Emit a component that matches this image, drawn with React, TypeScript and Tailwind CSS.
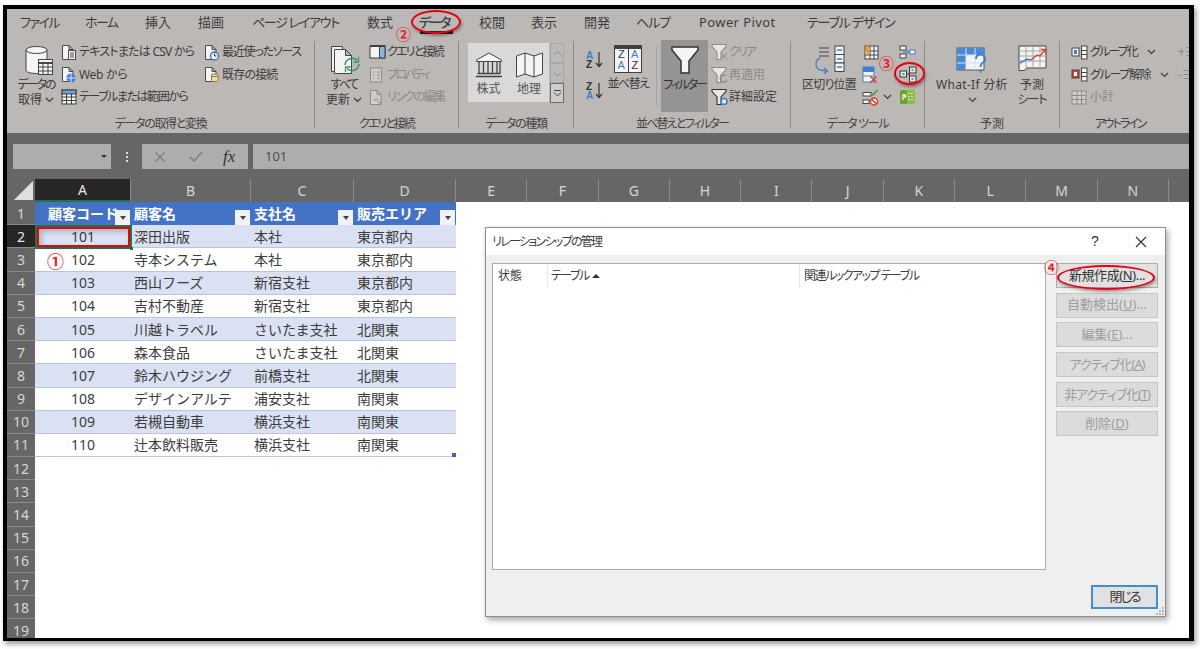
import React from 'react';

const ink = '#3c3c3c';
const dim = '#8d8a88';

const tabs = [
  { label: 'ファイル', w: 'w-[65px]', track: 'tracking-[-1.5px]' },
  { label: 'ホーム', w: 'w-[60px]', track: 'tracking-[-1.6px]' },
  { label: '挿入', w: 'w-[53px]', track: '' },
  { label: '描画', w: 'w-[54px]', track: '' },
  { label: 'ページ レイアウト', w: 'w-[115px]', track: 'tracking-[-1.3px]' },
  { label: '数式', w: 'w-[52px]', track: '' },
  { label: 'データ', w: 'w-[60px]', track: 'tracking-[-2px]' },
  { label: '校閲', w: 'w-[52px]', track: '' },
  { label: '表示', w: 'w-[53px]', track: '' },
  { label: '開発', w: 'w-[52px]', track: '' },
  { label: 'ヘルプ', w: 'w-[63px]', track: 'tracking-[-1px]' },
  { label: 'Power Pivot', w: 'w-[108px]', track: 'tracking-[0.4px]' },
  { label: 'テーブル デザイン', w: 'w-[100px]', track: 'tracking-[-1.2px]' },
];

const columns = [
  { label: 'A', w: 'w-[96px]' },
  { label: 'B', w: 'w-[120px]' },
  { label: 'C', w: 'w-[103px]' },
  { label: 'D', w: 'w-[102px]' },
  { label: 'E', w: 'w-[71.3px]' },
  { label: 'F', w: 'w-[71.3px]' },
  { label: 'G', w: 'w-[71.3px]' },
  { label: 'H', w: 'w-[71.3px]' },
  { label: 'I', w: 'w-[71.3px]' },
  { label: 'J', w: 'w-[71.3px]' },
  { label: 'K', w: 'w-[71.3px]' },
  { label: 'L', w: 'w-[71.3px]' },
  { label: 'M', w: 'w-[71.3px]' },
  { label: 'N', w: 'w-[71.3px]' },
];

const customers = [
  ['101', '深田出版', '本社', '東京都内'],
  ['102', '寺本システム', '本社', '東京都内'],
  ['103', '西山フーズ', '新宿支社', '東京都内'],
  ['104', '吉村不動産', '新宿支社', '東京都内'],
  ['105', '川越トラベル', 'さいたま支社', '北関東'],
  ['106', '森本食品', 'さいたま支社', '北関東'],
  ['107', '鈴木ハウジング', '前橋支社', '北関東'],
  ['108', 'デザインアルテ', '浦安支社', '南関東'],
  ['109', '若槻自動車', '横浜支社', '南関東'],
  ['110', '辻本飲料販売', '横浜支社', '南関東'],
];

const rowNumbers = Array.from({ length: 19 }, (_, i) => i + 1);

const Chev = ({ color = ink }: { color?: string }) => (
  <svg width="9" height="6" viewBox="0 0 9 6" className="shrink-0">
    <path d="M1 1l3.5 3.5L8 1" fill="none" stroke={color} strokeWidth="1.2" />
  </svg>
);

const Page = ({ stroke = '#4a4a4a' }: { stroke?: string }) => (
  <path d="M1.5 1.5h6.5l4 4v10h-10.500z M8 1.500v4h4" fill="#f4f4f4" stroke={stroke} strokeWidth="1" />
);

const TextFileIcon = () => (
  <svg width="17" height="17" viewBox="0 0 17 17">
    <Page />
    <rect x="7.500" y="6.500" width="7" height="9" fill="#f4f4f4" stroke="#4a4a4a" />
    <path d="M9 9h4M9 11h4M9 13h4" stroke="#4a4a4a" />
  </svg>
);
const WebIcon = () => (
  <svg width="17" height="17" viewBox="0 0 17 17">
    <Page />
    <circle cx="10" cy="12" r="4.500" fill="#3f7fcb" />
    <path d="M5.500 12h9M10 7.500v9" stroke="#dbe8f6" />
  </svg>
);
const RangeIcon = () => (
  <svg width="16" height="16" viewBox="0 0 16 16">
    <rect x="1" y="1" width="14" height="14" fill="#f4f4f4" stroke="#3f3f3f" />
    <rect x="1" y="1" width="14" height="4" fill="#6f9fd8" stroke="#3f3f3f" />
    <path d="M1 8h14M1 11.500h14M5.500 5v10M10.500 5v10" stroke="#3f3f3f" />
  </svg>
);
const RecentIcon = () => (
  <svg width="17" height="17" viewBox="0 0 17 17">
    <Page />
    <circle cx="10.500" cy="12" r="4" fill="#f4f4f4" stroke="#2f6db5" strokeWidth="1.300" />
    <path d="M10.500 9.500V12h2" fill="none" stroke="#333" />
  </svg>
);
const ExistingIcon = () => (
  <svg width="17" height="17" viewBox="0 0 17 17">
    <Page />
    <rect x="7.500" y="8" width="6.500" height="7.500" rx="1" fill="#eadcb4" stroke="#9a7a33" />
    <path d="M7.500 10.500h6.500" stroke="#9a7a33" />
  </svg>
);
const DataIcon = () => (
  <svg width="30" height="32" viewBox="0 0 30 32" className="ml-[5px]">
    <path d="M2 5v20c0 2 4 3.500 10.500 3.500S23 27 23 25V5" fill="#f5f5f5" stroke="#444" />
    <ellipse cx="12.500" cy="5" rx="10.500" ry="3.500" fill="#f5f5f5" stroke="#444" />
    <rect x="14.500" y="14.500" width="14" height="15" fill="#f5f5f5" stroke="#444" />
    <path d="M14.500 18h14" stroke="#444" strokeWidth="2" />
    <path d="M14.500 22h14M14.500 26h14M19 18v12M24 18v12" stroke="#444" />
  </svg>
);
const RefreshIcon = () => (
  <svg width="32" height="32" viewBox="0 0 32 32" className="ml-[4px]">
    <path d="M1.500 1.500h11v25h-11z" fill="#f4f4f4" stroke="#444" />
    <path d="M4.500 4.500h11l6 6v18h-17z M15.500 4.500v6h6" fill="#f4f4f4" stroke="#444" />
    <path d="M15 20a7 7 0 0 1 12-4.500M29 19a7 7 0 0 1-12 4.500" fill="none" stroke="#2f9a58" strokeWidth="1.500" />
    <path d="M28.500 12v5h-5M15.500 27v-5h5" fill="none" stroke="#2f9a58" strokeWidth="1.300" />
  </svg>
);
const QueryIcon = () => (
  <svg width="17" height="14" viewBox="0 0 17 14">
    <rect x="1" y="1" width="15" height="12" fill="#f4f4f4" stroke="#3f3f3f" />
    <rect x="10.500" y="1" width="5.500" height="12" fill="#8db4e2" stroke="#3f3f3f" />
    <path d="M1 1h15" stroke="#3f3f3f" strokeWidth="2" />
  </svg>
);
const PropIcon = () => (
  <svg width="14" height="16" viewBox="0 0 14 16">
    <rect x="1.500" y="1" width="11" height="14" fill="#cfccc9" stroke={dim} />
    <path d="M4 5h1.500M8 5h3M4 8h1.500M8 8h3M4 11h1.500M8 11h3" stroke={dim} />
  </svg>
);
const LinkEditIcon = () => (
  <svg width="15" height="17" viewBox="0 0 15 17">
    <path d="M1.500 1.500h6.500l4 4v10h-10.500z M8 1.500v4h4" fill="#cfccc9" stroke={dim} />
    <path d="M5 12a2 2 0 0 1 4 0 2 2 0 0 0 4 0" fill="none" stroke={dim} />
  </svg>
);
const BankIcon = () => (
  <svg width="28" height="26" viewBox="0 0 28 26">
    <path d="M14 1L1.500 8v1.500h25V8z" fill="#f4f4f4" stroke="#444" />
    <path d="M4 10v11M8.500 10v11M13 10v11M17.500 10v11M22 10v11M25 10v11" stroke="#444" strokeWidth="1.300" />
    <path d="M2.500 21.500h23M1 24.500h26" stroke="#444" strokeWidth="1.300" />
  </svg>
);
const MapIcon = () => (
  <svg width="29" height="26" viewBox="0 0 29 26">
    <path d="M1.500 4l8.500-3 9 3 8.500-3v21l-8.500 3-9-3-8.500 3z" fill="#f4f4f4" stroke="#444" />
    <path d="M10 1v21M19 4v21" stroke="#444" />
  </svg>
);
const SortAz = ({ flip = false }: { flip?: boolean }) => (
  <div className="relative w-[17px] h-[17px] text-[10px] leading-[8.500px] font-bold font-['Liberation_Sans',sans-serif]">
    <div className={flip ? 'text-[#333]' : 'text-[#3f7fcb]'}>{flip ? 'Z' : 'A'}</div>
    <div className={flip ? 'text-[#3f7fcb]' : 'text-[#333]'}>{flip ? 'A' : 'Z'}</div>
    <svg width="8" height="16" viewBox="0 0 8 16" className="absolute right-0 top-0">
      <path d="M4 0v14M1 11l3 3.500L7 11" fill="none" stroke="#333" strokeWidth="1.200" />
    </svg>
  </div>
);
const SortBigIcon = () => (
  <div className="w-[28px] h-[28px] border border-[#3f3f3f] bg-[#f4f4f4] border-t-[4px] flex text-[11px] leading-[11px] text-center font-['Liberation_Sans',sans-serif]">
    <div className="flex-1 border-r border-[#3f3f3f] text-[#333]">Z<div className="text-[#3f7fcb]">A</div></div>
    <div className="flex-1 text-[#3f7fcb]">A<div className="text-[#333]">Z</div></div>
  </div>
);
const FunnelBig = () => (
  <svg width="30" height="30" viewBox="0 0 30 30">
    <path d="M2 2h26v3l-9 11v12h-8V16L2 5z" fill="#f4f4f4" stroke="#333" strokeWidth="1.500" />
  </svg>
);
const SmallFunnel = ({ color, badge }: { color: string; badge: React.ReactNode }) => (
  <svg width="18" height="18" viewBox="0 0 18 18">
    <path d="M1 1.500h14v2l-5 5.500v7.500H6V9L1 3.500z" fill="#e9e7e5" stroke={color} strokeWidth="1.100" />
    {badge}
  </svg>
);
const SplitIcon = () => (
  <svg width="34" height="30" viewBox="0 0 34 30" className="ml-[2px]">
    <path d="M6 3h10M6 7h10M6 11h10" stroke="#444" strokeWidth="1.200" />
    <rect x="22" y="1" width="9" height="8.500" fill="#f4f4f4" stroke="#444" />
    <rect x="22" y="9.500" width="9" height="8.500" fill="#f4f4f4" stroke="#444" />
    <rect x="22" y="18" width="9" height="8.500" fill="#f4f4f4" stroke="#444" />
    <path d="M24 5h5M24 14h5M24 22h5" stroke="#3f7fcb" strokeWidth="1.500" />
    <path d="M7 13a6.500 6.500 0 0 0 0 12l7 1M11 23l3.500 3-3.500 3" fill="none" stroke="#3f7fcb" strokeWidth="1.300" />
  </svg>
);
const FlashIcon = () => (
  <svg width="17" height="16" viewBox="0 0 17 16">
    <rect x="3" y="2" width="13" height="13" fill="#f4f4f4" stroke="#444" />
    <path d="M3 7h13M3 11h13M8 2v13M12 2v13" stroke="#444" />
    <path d="M6 0L2 8h3l-2 6 6-8H6l2-6z" fill="#e8912d" />
  </svg>
);
const DupIcon = () => (
  <svg width="17" height="18" viewBox="0 0 17 18">
    <rect x="1" y="1" width="11" height="15" fill="#f4f4f4" stroke="#3f7fcb" />
    <rect x="1" y="1" width="11" height="5" fill="#3f7fcb" />
    <path d="M1 10h11" stroke="#3f7fcb" />
    <path d="M8.500 10.500l6 6M14.500 10.500l-6 6" stroke="#d8412f" strokeWidth="1.600" />
  </svg>
);
const ValidateIcon = () => (
  <svg width="17" height="17" viewBox="0 0 17 17">
    <rect x="1" y="3.500" width="8" height="3.500" fill="#f4f4f4" stroke="#444" />
    <rect x="1" y="11" width="6" height="3.500" fill="#f4f4f4" stroke="#444" />
    <path d="M9 4l2 2 4.500-5" fill="none" stroke="#3f9a4f" strokeWidth="1.400" />
    <circle cx="12" cy="12.500" r="3.500" fill="#f4f4f4" stroke="#d8412f" strokeWidth="1.500" />
    <path d="M9.500 10l5 5" stroke="#d8412f" strokeWidth="1.500" />
  </svg>
);
const ConsolidateIcon = () => (
  <svg width="17" height="15" viewBox="0 0 17 15">
    <rect x="1" y="1" width="6" height="4" fill="#f4f4f4" stroke="#444" />
    <rect x="1" y="9" width="6" height="4" fill="#f4f4f4" stroke="#444" />
    <rect x="11" y="5" width="5" height="4" fill="#f4f4f4" stroke="#3f7fcb" />
    <path d="M4 7h6M8 5l2 2-2 2" fill="none" stroke="#3f7fcb" />
  </svg>
);
const RelationIcon = () => (
  <svg width="18" height="17" viewBox="0 0 18 17">
    <rect x="10.500" y="1" width="6.500" height="6" fill="#e9e7e5" stroke="#3a3a3a" />
    <rect x="10.500" y="10" width="6.500" height="6" fill="#e9e7e5" stroke="#3a3a3a" />
    <rect x="1" y="5" width="6.500" height="6" fill="#e9e7e5" stroke="#3a3a3a" />
    <path d="M7.500 8h3M10.500 4v9" stroke="#3a3a3a" />
    <path d="M3 8h2.500M12.500 4h2M12.500 13h2" stroke="#3a3a3a" />
  </svg>
);
const ModelIcon = () => (
  <svg width="17" height="16" viewBox="0 0 17 16">
    <rect x="1" y="1" width="15" height="14" rx="1.500" fill="#8cbf45" />
    <rect x="1" y="1" width="7" height="14" rx="1.500" fill="#6aa52e" />
    <path d="M4 11V6h2.500v2H5M10 4v1M13 4v1M10 7v1M13 7v1M10 10v1M13 10v1" fill="none" stroke="#f4f4f4" strokeWidth="1.300" />
  </svg>
);
const WhatIfIcon = () => (
  <svg width="32" height="30" viewBox="0 0 32 30">
    <rect x="1" y="2" width="27" height="22" fill="#f4f4f4" stroke="#555" />
    <rect x="1" y="2" width="9" height="22" fill="#4a8ad4" />
    <rect x="1" y="2" width="27" height="7" fill="#4a8ad4" />
    <rect x="10" y="9" width="9" height="8" fill="#f4f4f4" />
    <path d="M10 2v22M19 2v22M1 9h27M1 17h27" stroke="#d6e2f0" />
    <path d="M20 13a4.500 4.500 0 1 1 6.500 4c-1.500 1-2 2-2 4M24.500 24v2.500" fill="none" stroke="#3f7fcb" strokeWidth="2" />
  </svg>
);
const ForecastIcon = () => (
  <svg width="29" height="26" viewBox="0 0 29 26">
    <path d="M1 1h27v22H9l-3 2.500H1z" fill="#f4f4f4" stroke="#444" />
    <path d="M1 6h27M1 11h27M1 16h27M8 1v22M15 1v22M22 1v22" stroke="#a8a6a4" />
    <path d="M2 18l7-4 4 1" fill="none" stroke="#3f7fcb" strokeWidth="1.500" />
    <path d="M13 15l6-5 3 1 5-6M23 4.500h4.500V9" fill="none" stroke="#d8412f" strokeWidth="1.300" />
  </svg>
);
const GroupIcon = ({ ungroup = false }: { ungroup?: boolean }) => (
  <svg width="17" height="15" viewBox="0 0 17 15">
    <rect x="1" y="3" width="7" height="8" fill={ungroup ? '#d8412f' : '#f4f4f4'} stroke="#444" />
    <rect x="3" y="5" width="3" height="4" fill={ungroup ? '#f4f4f4' : '#3f7fcb'} />
    <rect x="10.500" y="1" width="5.500" height="13" fill="#f4f4f4" stroke="#444" />
    <path d="M10.500 5.500H16M10.500 9.500H16" stroke="#444" />
  </svg>
);
const SubtotalIcon = () => (
  <svg width="16" height="15" viewBox="0 0 16 15">
    <rect x="1" y="1" width="14" height="13" fill="#cfccc9" stroke={dim} />
    <path d="M1 5.500h14M1 9.500h14M6 1v13M10.500 1v13" stroke={dim} />
  </svg>
);

const Group = ({ label, w, track = '', children }: { label: string; w: string; track?: string; children: React.ReactNode }) => (
  <div className={`${w} shrink-0 h-[87px] mt-[4px] flex flex-col border-r border-[#8f8c8a]`}>
    <div className="h-[75px] flex">{children}</div>
    <div className={`h-[12px] leading-[16px] text-[12px] text-center whitespace-nowrap text-[#444] ${track}`}>{label}</div>
  </div>
);

const Row = ({ icon, label, off = false, track = '', tail, iconW = 'w-[18px]' }: { icon: React.ReactNode; label: string; off?: boolean; track?: string; tail?: React.ReactNode; iconW?: string }) => (
  <div className={`h-[22.5px] flex items-center whitespace-nowrap text-[12px] ${off ? 'text-[#8d8a88]' : 'text-[#3c3c3c]'}`}>
    <div className={`${iconW} shrink-0 flex items-center`}>{icon}</div>
    <span className={track}>{label}</span>
    {tail}
  </div>
);

const BigButton = ({ icon, lines, w, chev = false }: { icon: React.ReactNode; lines: { text: string; track?: string }[]; w: string; chev?: boolean }) => (
  <div className={`${w} shrink-0 flex flex-col items-center pt-[4px] text-[12px] text-[#3c3c3c] whitespace-nowrap`}>
    <div className="h-[33px] flex items-start justify-center">{icon}</div>
    {lines.map((line, i) => (
      <div key={line.text} className="h-[14.500px] leading-[14px] flex items-center gap-[3px]">
        <span className={line.track}>{line.text}</span>
        {chev && i === lines.length - 1 && <Chev />}
      </div>
    ))}
  </div>
);

const ScrollButton = ({ last = false, up = false }: { last?: boolean; up?: boolean }) => (
  <div className={`h-[20px] w-[14px] border flex items-center justify-center ${last ? 'border-[#6e6c6a] bg-[#cfccc9]' : 'border-[#a9a6a4]'}`}>
    <svg width="9" height="7" viewBox="0 0 9 7">
      {last && <path d="M1 0.500h7" stroke="#444" />}
      <path d={up ? 'M1 5l3.500-3.500L8 5' : 'M1 2.500L4.500 6 8 2.500'} fill="none" stroke={last ? '#444' : '#8d8a88'} />
    </svg>
  </div>
);

const Ribbon = () => (
  <div className="h-[124px] bg-[#bcb8b5] shrink-0 shadow-[0_1px_2px_#333]">
    <div className="h-[28px] flex items-center pl-[13px] text-[13px] text-[#3c3c3c] whitespace-nowrap">
      {tabs.map((tab) => (
        <div key={tab.label} className={`${tab.w} ${tab.track} shrink-0 ${tab.label === 'データ' ? 'font-medium' : ''}`}>{tab.label}</div>
      ))}
    </div>
    <div className="flex">
      <Group label="データの取得と変換" w="w-[308px]" track="tracking-[-1.3px]">
        <div className="pl-[7px]" />
        <BigButton w="w-[44px]" icon={<DataIcon />} lines={[{ text: 'データの', track: 'tracking-[-2px]' }, { text: '取得' }]} chev />
        <div className="ml-[3px] w-[143px] shrink-0">
          <Row icon={<TextFileIcon />} label="テキストまたは CSV から" track="tracking-[-0.75px]" />
          <Row icon={<WebIcon />} label="Web から" track="tracking-[-0.3px]" />
          <Row icon={<RangeIcon />} label="テーブルまたは範囲から" track="tracking-[-1.45px]" />
        </div>
        <div>
          <Row icon={<RecentIcon />} label="最近使ったソース" track="tracking-[-1.25px]" />
          <Row icon={<ExistingIcon />} label="既存の接続" track="tracking-[-0.8px]" />
        </div>
      </Group>
      <Group label="クエリと接続" w="w-[144px]" track="tracking-[-2px]">
        <div className="pl-[7px]" />
        <BigButton w="w-[44px]" icon={<RefreshIcon />} lines={[{ text: 'すべて', track: 'tracking-[-2px]' }, { text: '更新' }]} chev />
        <div className="ml-[3px]">
          <Row icon={<QueryIcon />} label="クエリと接続" track="tracking-[-1.800px]" />
          <Row icon={<PropIcon />} label="プロパティ" off track="tracking-[-2.400px]" />
          <Row icon={<LinkEditIcon />} label="リンクの編集" off track="tracking-[-1.500px]" />
        </div>
      </Group>
      <Group label="データの種類" w="w-[115px]" track="tracking-[-1.3px]">
        <div className="ml-[9px] mt-[2px] w-[81px] h-[59px] bg-[#d9d9d9] flex text-[12px] text-[#555]">
          <div className="w-[41px] flex flex-col items-center pt-[9px]">
            <BankIcon />
            <div className="mt-[3px] leading-[16px]">株式</div>
          </div>
          <div className="w-[40px] flex flex-col items-center pt-[9px]">
            <MapIcon />
            <div className="mt-[3px] leading-[16px]">地理</div>
          </div>
        </div>
        <div className="mt-[2px] ml-px">
          <ScrollButton up />
          <ScrollButton />
          <ScrollButton last />
        </div>
      </Group>
      <Group label="並べ替えとフィルター" w="w-[217px]" track="tracking-[-1.8px]">
        <div className="pl-[12px] pt-[11px] w-[33px] shrink-0 flex flex-col gap-[14px]">
          <SortAz />
          <SortAz flip />
        </div>
        <div className="w-[42px] shrink-0 flex flex-col items-center pt-[4px] text-[12px] text-[#3c3c3c] whitespace-nowrap">
          <SortBigIcon />
          <div className="mt-[4px] leading-[14px] tracking-[-1.5px]">並べ替え</div>
        </div>
        <div className="ml-[7px] mt-[6px] w-px h-[58px] bg-[#a5a2a0]" />
        <div className="ml-[4px] -mt-px w-[47px] h-[72px] bg-[#969493] flex flex-col items-center pt-[5px] text-[12px] text-[#333] whitespace-nowrap shrink-0">
          <FunnelBig />
          <div className="mt-[3px] leading-[14px] tracking-[-2px]">フィルター</div>
        </div>
        <div className="ml-[3px]">
          <Row icon={<SmallFunnel color={dim} badge={<path d="M10 10l6 6M16 10l-6 6" stroke={dim} />} />} label="クリア" off track="tracking-[-2px]" />
          <Row icon={<SmallFunnel color={dim} badge={<path d="M15 10a3.500 3.500 0 1 0 1 4" fill="none" stroke={dim} strokeWidth="1.300" />} />} label="再適用" off />
          <Row icon={<SmallFunnel color="#333" badge={<circle cx="13" cy="13.500" r="3" fill="#dce7f3" stroke="#3f7fcb" strokeWidth="1.500" />} />} label="詳細設定" />
        </div>
      </Group>
      <Group label="データ ツール" w="w-[134px]" track="tracking-[-1.3px]">
        <div className="pl-[9px]" />
        <BigButton w="w-[58px]" icon={<SplitIcon />} lines={[{ text: '区切り位置', track: 'tracking-[-0.8px]' }]} />
        <div className="ml-[4px] w-[37px] shrink-0">
          <div className="h-[22.5px] flex items-center"><FlashIcon /></div>
          <div className="h-[22.5px] flex items-center"><DupIcon /></div>
          <div className="h-[22.5px] flex items-center gap-[4px]"><ValidateIcon /><Chev /></div>
        </div>
        <div>
          <div className="h-[22.5px] flex items-center"><ConsolidateIcon /></div>
          <div className="h-[22.5px] flex items-center"><RelationIcon /></div>
          <div className="h-[22.5px] flex items-center"><ModelIcon /></div>
        </div>
      </Group>
      <Group label="予測" w="w-[135px]">
        <div className="pl-[7px]" />
        <div className="w-[80px] shrink-0 flex flex-col items-center pt-[5px] text-[12px] text-[#3c3c3c] whitespace-nowrap">
          <div className="h-[32px]"><WhatIfIcon /></div>
          <div className="h-[14.500px] leading-[14px] tracking-[0.3px]">What-If 分析</div>
          <div className="h-[14.500px] flex items-center"><Chev /></div>
        </div>
        <BigButton w="w-[40px]" icon={<ForecastIcon />} lines={[{ text: '予測' }, { text: 'シート', track: 'tracking-[-1px]' }]} />
      </Group>
      <div className="h-[87px] mt-[4px] flex-1 flex flex-col">
        <div className="h-[75px] flex pl-[11px]">
          <div className="w-[107px] shrink-0">
            <Row iconW="w-[19px]" icon={<GroupIcon />} label="グループ化" track="tracking-[-1.8px]" tail={<span className="ml-[10px]"><Chev /></span>} />
            <Row iconW="w-[19px]" icon={<GroupIcon ungroup />} label="グループ解除" track="tracking-[-1.3px]" tail={<span className="ml-[10px]"><Chev /></span>} />
            <Row iconW="w-[19px]" icon={<SubtotalIcon />} label="小計" off />
          </div>
          <div className="text-[12px] text-[#8d8a88] whitespace-nowrap">
            <div className="h-[22.5px] flex items-center">+ヨ</div>
            <div className="h-[22.5px] flex items-center">-ヨ</div>
          </div>
        </div>
        <div className="h-[12px] leading-[16px] text-[12px] text-center text-[#444] w-[120px] tracking-[-2px]">アウトライン</div>
      </div>
    </div>
  </div>
);

const FormulaBar = () => (
  <div className="h-[46px] shrink-0 bg-[#666666] pt-[11px]">
    <div className="h-[25px] flex">
      <div className="ml-[6px] w-[98px] bg-[#adadad] flex items-center justify-end pr-[4px]">
        <div className="w-0 h-0 border-x-[3px] border-x-transparent border-t-[3px] border-t-[#333]" />
      </div>
      <div className="w-[31px] flex flex-col items-center justify-center gap-[2px]">
        <div className="w-[2px] h-[2px] bg-[#ddd]" />
        <div className="w-[2px] h-[2px] bg-[#ddd]" />
        <div className="w-[2px] h-[2px] bg-[#ddd]" />
      </div>
      <div className="w-[106px] bg-[#adadad] flex items-center pl-[12px] text-[#555]">
        <svg width="12" height="12" viewBox="0 0 12 12">
          <path d="M1.500 1.500l9 9M10.500 1.500l-9 9" stroke="#7d7d7d" strokeWidth="1.300" />
        </svg>
        <svg width="14" height="12" viewBox="0 0 14 12" className="ml-[23px]">
          <path d="M1 6l4 4 8-9" fill="none" stroke="#7d7d7d" strokeWidth="1.500" />
        </svg>
        <span className="ml-[20px] font-['Liberation_Serif',serif] italic text-[17px] text-[#333] font-medium">fx</span>
      </div>
      <div className="ml-[5px] flex-1 bg-[#adadad] pl-[12px] text-[13px] leading-[25px] text-[#4d4d4d]">101</div>
    </div>
  </div>
);

const ColumnHeaders = () => (
  <div className="h-[23px] shrink-0 bg-[#666666] flex text-[14px] text-[#d6d6d6]">
    <div className="w-[28px] shrink-0 relative">
      <div className="absolute right-[2px] bottom-[2px] w-0 h-0 border-l-[19px] border-l-transparent border-b-[19px] border-b-[#dfdfdf]" />
    </div>
    {columns.map((col) => (
      <div
        key={col.label}
        className={`${col.w} shrink-0 flex items-center justify-center border-r border-[#8a8a8a] ${col.label === 'A' ? 'bg-[#262626] text-[#e6e6e6] border-b-2 border-b-[#217346]' : ''}`}
      >
        {col.label}
      </div>
    ))}
  </div>
);

const FilterButton = () => (
  <div className="absolute right-px bottom-0 w-[15px] h-[15px] bg-[#f2f2f2] flex items-center justify-center">
    <div className="w-0 h-0 border-x-[3.500px] border-x-transparent border-t-[4px] border-t-[#444]" />
  </div>
);

const headCell = 'relative h-full flex items-center whitespace-nowrap overflow-hidden shrink-0';
const bodyCell = 'h-full flex items-center whitespace-nowrap shrink-0';

const Sheet = () => (
  <div className="flex-1 min-h-0 overflow-hidden bg-white [font-feature-settings:normal]">
    {rowNumbers.map((n) => {
      const row = n >= 2 && n <= 11 ? customers[n - 2] : null;
      const band = n % 2 === 0 ? 'bg-[#d9e1f2]' : 'bg-white';
      return (
        <div key={n} className="h-[23.2px] flex text-[14px]">
          <div className={`w-[28px] shrink-0 flex items-center justify-center border-b border-[#8a8a8a] ${n === 2 ? 'bg-[#262626] text-[#e6e6e6]' : 'bg-[#666666] text-[#d6d6d6]'}`}>
            {n}
          </div>
          {n === 1 && (
            <div className="flex w-[421px] bg-[#4472c4] text-white font-bold h-full">
              <div className={`${headCell} w-[96px] pl-[13px]`}>顧客コード<FilterButton /></div>
              <div className={`${headCell} w-[120px] pl-[3px]`}>顧客名<FilterButton /></div>
              <div className={`${headCell} w-[103px] pl-[3px]`}>支社名<FilterButton /></div>
              <div className={`${headCell} w-[102px] pl-[3px]`}>販売エリア<FilterButton /></div>
            </div>
          )}
          {row && (
            <div className={`flex w-[421px] h-full text-[#3c3c3c] border-b border-[#b4c6e7] ${band}`}>
              <div className={`${bodyCell} w-[96px] justify-center`}>{row[0]}</div>
              <div className={`${bodyCell} w-[120px] pl-[3px]`}>{row[1]}</div>
              <div className={`${bodyCell} w-[103px] pl-[3px]`}>{row[2]}</div>
              <div className={`${bodyCell} w-[102px] pl-[3px]`}>{row[3]}</div>
            </div>
          )}
        </div>
      );
    })}
  </div>
);

const dialogButtons = [
  { text: '自動検出', key: 'U', tail: '...', track: '' },
  { text: '編集', key: 'E', tail: '...', track: '' },
  { text: 'アクティブ化', key: 'A', tail: '', track: 'tracking-[-1.1px]' },
  { text: '非アクティブ化', key: 'T', tail: '', track: 'tracking-[-1.1px]' },
  { text: '削除', key: 'D', tail: '', track: '' },
];

const RelationshipDialog = () => (
  <div className="absolute left-[485px] top-[227px] w-[681px] h-[390px] bg-[#efefef] border border-[#8c8c8c] shadow-[2px_3px_6px_rgba(0,0,0,0.35)] flex flex-col">
    <div className="h-[27px] shrink-0 bg-white flex items-center pl-[6px] text-[12px] text-[#3c3c3c]">
      <span className="flex-1 whitespace-nowrap tracking-[-1.7px]">リレーションシップの管理</span>
      <span className="w-[44px] text-[14px] font-['Liberation_Sans',sans-serif] text-[#333]">?</span>
      <svg width="12" height="12" viewBox="0 0 12 12" className="mr-[18px]">
        <path d="M1 1l10 10M11 1L1 11" stroke="#333" strokeWidth="1.100" />
      </svg>
    </div>
    <div className="flex-1 flex pl-[6px] pt-[8px] pb-[7px]">
      <div className="w-[554px] h-[307px] bg-white border border-[#adadad] shrink-0 text-[12px] text-[#3c3c3c]">
        <div className="h-[24px] flex items-center whitespace-nowrap">
          <div className="w-[55px] h-full pl-[5px] leading-[24px] border-r border-[#e8e8e8]">状態</div>
          <div className="w-[252px] h-full pl-[3px] flex items-center gap-[3px] border-r border-[#e8e8e8]">
            <span className="tracking-[-1.5px]">テーブル</span>
            <div className="w-0 h-0 border-x-[4px] border-x-transparent border-b-[4px] border-b-[#333]" />
          </div>
          <div className="pl-[4px] tracking-[-1.5px]">関連ルックアップ テーブル</div>
        </div>
      </div>
      <div className="ml-[10px] w-[102px] flex flex-col justify-between text-[13px] whitespace-nowrap">
        <div className="flex flex-col gap-[4.700px]">
          <div className="h-[25px] border border-[#adadad] bg-[#e1e1e1] text-[#333] flex items-center justify-center tracking-[-0.4px]">新規作成(<u>N</u>)...</div>
          {dialogButtons.map((b) => (
            <div key={b.key} className={`h-[25px] border border-[#c6c6c6] bg-[#dcdcdc] text-[#9c9c9c] flex items-center justify-center ${b.track}`}>
              {b.text}(<u>{b.key}</u>){b.tail}
            </div>
          ))}
        </div>
        <div className="self-end w-[67px] h-[24px] border-2 border-[#3f8fd6] bg-[#e1e1e1] text-[#333] flex items-center justify-center tracking-[-2px]">閉じる</div>
      </div>
    </div>
    <svg width="9" height="9" viewBox="0 0 9 9" className="absolute right-[1px] bottom-[1px]">
      <path d="M7 1h2v2H7zM4 4h2v2H4zM7 4h2v2H7zM1 7h2v2H1zM4 7h2v2H4zM7 7h2v2H7z" fill="#b5b5b5" />
    </svg>
  </div>
);

const redRing = 'absolute rounded-[50%] border-2 border-[#e60012] shadow-[1px_2px_3px_rgba(0,0,0,0.35)]';
const redNumber = 'absolute text-[#f0202a] leading-none font-bold';

export default function App() {
  return (
    <div className="relative w-[1200px] h-[649px] bg-white overflow-hidden font-['Noto_Sans','Noto_Sans_CJK_JP',sans-serif] [font-feature-settings:'palt']">
      <div className="ml-[3px] mt-[5px] w-[1191px] h-[636px] border-t-4 border-l-4 border-r-[5px] border-b-[3px] border-black shadow-[2px_3px_5px_rgba(0,0,0,0.4)] flex flex-col overflow-hidden">
        <Ribbon />
        <FormulaBar />
        <ColumnHeaders />
        <Sheet />
      </div>

      <div className="absolute left-[420px] top-[31px] w-[33px] h-[3px] bg-[#222]" />
      <div className={`${redRing} left-[411px] top-[10px] w-[50px] h-[24px]`} />
      <div className={`${redNumber} left-[396px] top-[27px] text-[15px]`}>②</div>
      <div className={`${redRing} left-[894px] top-[62px] w-[31px] h-[23px]`} />
      <div className={`${redNumber} left-[879px] top-[56px] text-[15px]`}>③</div>

      <div className="absolute left-[35px] top-[225px] w-[97px] h-[24px] border-2 border-[#217346]" />
      <div className="absolute left-[37px] top-[227px] w-[93px] h-[20px] border-2 border-[#e60012] shadow-[inset_3px_3px_5px_rgba(0,0,0,0.2)]" />
      <div className="absolute left-[130px] top-[247px] w-[3px] h-[3px] bg-[#217346]" />
      <div className={`${redNumber} left-[47px] top-[253px] text-[17px]`}>①</div>
      <div className="absolute left-[452px] top-[453px] w-[4px] h-[4px] bg-[#3f62b5]" />

      <RelationshipDialog />

      <div className={`${redRing} left-[1057px] top-[265px] w-[98px] h-[25px]`} />
      <div className={`${redNumber} left-[1044px] top-[260px] text-[15px]`}>④</div>
    </div>
  );
}
